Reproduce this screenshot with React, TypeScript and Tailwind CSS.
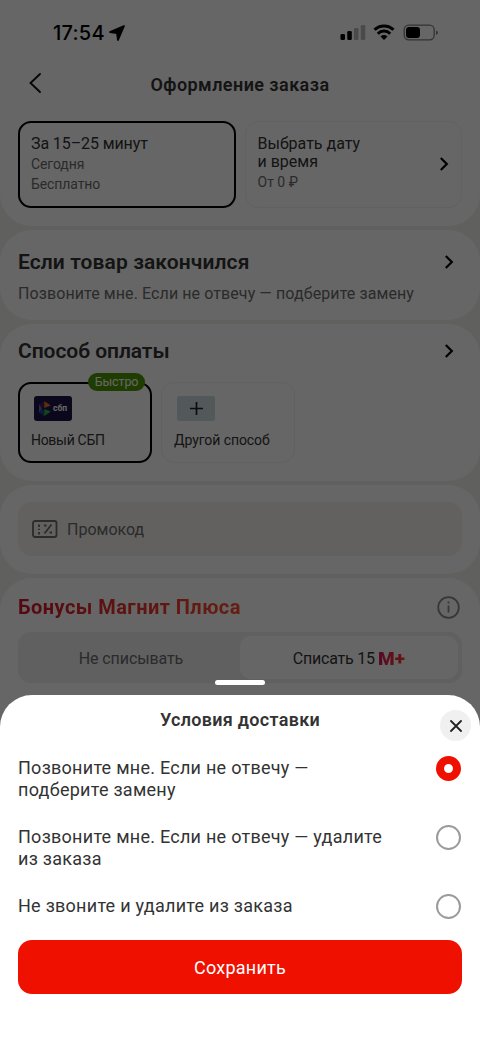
import type { ReactNode } from "react";
import { clsx } from "clsx";

// ─────────────────────────────────────────────
// Иконки
// ─────────────────────────────────────────────

function ChevronRight({ className }: { className?: string }) {
  return (
    <svg className={clsx("h-4 w-4 shrink-0", className)} viewBox="0 0 16 16" fill="none" stroke="#000" strokeWidth="2.2">
      <path d="M4.800 2l6 6-6 6" />
    </svg>
  );
}

function StatusIcons() {
  return (
    <svg className="h-[18px] w-[100px]" viewBox="0 0 100 18">
      <rect x="0.500" y="10" width="4.500" height="6" rx="1.300" />
      <rect x="7.300" y="7" width="4.500" height="9" rx="1.300" />
      <rect x="14" y="4" width="4.500" height="12" rx="1.300" fill="#b9b9b9" />
      <rect x="20.800" y="1" width="4.500" height="15" rx="1.300" fill="#b9b9b9" />
      <g fill="none" stroke="#000" strokeWidth="3">
        <path d="M34.500 5.800a13.500 13.500 0 0 1 19 0" />
        <path d="M37.800 9.700a8.700 8.700 0 0 1 12.400 0" />
      </g>
      <path d="M40.500 12.400a5 5 0 0 1 7 0L44 16z" />
      <rect x="64.200" y="1.200" width="30" height="14.600" rx="4.500" fill="none" stroke="#808080" strokeWidth="1.300" />
      <rect x="66" y="3" width="14" height="11" rx="3" />
      <path d="M96 6.500q2 .6 2 2.200t-2 2.200z" fill="#808080" />
    </svg>
  );
}

function CouponIcon() {
  return (
    <svg className="h-[18px] w-[26px] shrink-0" viewBox="0 0 26 18" fill="none" stroke="#6b6b6b" strokeWidth="1.800">
      <rect x="1" y="1" width="23.500" height="16" rx="2" />
      <path d="M7 4.500v2.500M7 8.700v1.300M7 12v2.500M19.500 4.500l-7 9" />
      <path d="M12 4.500h2.500v2H12zM17.500 11.500H20v2h-2.500z" fill="#6b6b6b" stroke="none" />
    </svg>
  );
}

function SbpMark() {
  return (
    <svg className="h-[15px] w-[12px] shrink-0" viewBox="0 0 12 15">
      <path d="M0 3l3 4.500L0 12z" fill="#5b67b2" />
      <path d="M5 0v5.500L3.200 7 .4 3.500z" fill="#8d3b7a" opacity=".35" />
      <path d="M5.300 0l6.500 4.500-6.500 2.500z" fill="#e8702a" />
      <path d="M5.300 8l6.500 2.500-6.500 4.500z" fill="#2bb24c" />
      <path d="M.4 11.500L3.200 8 5 9.500V15z" fill="#1487c9" opacity=".5" />
    </svg>
  );
}

// ─────────────────────────────────────────────
// Компоненты
// ─────────────────────────────────────────────

function Section({ children, className }: { children: ReactNode; className?: string }) {
  return <section className={clsx("bg-white px-[18px]", className)}>{children}</section>;
}

function Radio({ checked }: { checked: boolean }) {
  return (
    <span
      className={clsx(
        "mr-px h-[25px] w-[25px] shrink-0 rounded-full bg-white",
        checked ? "border-8 border-[#f01000]" : "border-2 border-[#9b9b9b]"
      )}
    />
  );
}

const options = [
  { lines: ["Позвоните мне. Если не отвечу —", "подберите замену"], checked: true },
  { lines: ["Позвоните мне. Если не отвечу — удалите", "из заказа"], checked: false },
  { lines: ["Не звоните и удалите из заказа"], checked: false },
];

function DeliverySheet() {
  return (
    <div className="absolute inset-x-0 bottom-0 h-[361px]">
      <div className="mx-auto h-[5px] w-[50px] rounded-full bg-white" />
      <div className="mt-[10px] flex h-[346px] flex-col rounded-t-[32px] bg-white px-[18px]">
        <div className="relative flex h-[61px] justify-center pt-3">
          <h2 className="text-[18px] leading-[26px] font-semibold tracking-[0.3px]">Условия доставки</h2>
          <button className="absolute top-[15px] -right-[9px] flex h-[31px] w-[31px] items-center justify-center rounded-full bg-[#f0f0f0]">
            <svg className="h-3 w-3" viewBox="0 0 12 12" stroke="#222" strokeWidth="1.800" strokeLinecap="round">
              <path d="M1 1l10 10M11 1L1 11" />
            </svg>
          </button>
        </div>
        <ul className="flex flex-col gap-6">
          {options.map((o) => (
            <li key={o.lines.join(" ")} className="flex justify-between">
              <div className="pt-px text-[18px] leading-[22px] tracking-[0.26px]">
                {o.lines.map((line) => (
                  <p key={line} className="whitespace-nowrap">{line}</p>
                ))}
              </div>
              <Radio checked={o.checked} />
            </li>
          ))}
        </ul>
        <button className="mt-[21px] h-[54px] w-full rounded-[14px] bg-[#f01000] text-[18px] tracking-[0.25px] text-white">Сохранить</button>
      </div>
    </div>
  );
}

// ─────────────────────────────────────────────
// Экран
// ─────────────────────────────────────────────

export default function App() {
  return (
    <div className="relative h-[1041px] w-[480px] overflow-hidden bg-[#f1f0ec] font-['Roboto',sans-serif] text-[#333]">
      <div className="flex flex-col gap-1">
        <Section className="h-[226px] rounded-b-[32px]">
          <div className="flex h-[60px] items-center justify-between pt-[6px] pr-[22px] pl-[35px] text-black">
            <div className="flex items-center gap-1">
              <span className="font-['Inter',sans-serif] text-[20px] font-medium tracking-[0.25px]">17:54</span>
              <svg className="h-4 w-4" viewBox="0 0 16 16">
                <path d="M15 1L9 15 8 8 1 7z" stroke="#000" strokeWidth="1.800" strokeLinejoin="round" />
              </svg>
            </div>
            <StatusIcons />
          </div>
          <div className="relative flex h-[61px] justify-center pt-3">
            <svg className="absolute top-3 left-[11px] h-[22px] w-[13px]" viewBox="0 0 13 22" fill="none" stroke="#111" strokeWidth="1.900" strokeLinecap="round">
              <path d="M11 2L1.500 11l9.500 9" />
            </svg>
            <h1 className="text-[18px] leading-[26px] font-semibold tracking-[0.44px]">Оформление заказа</h1>
          </div>
          <div className="flex gap-[9px]">
            <div className="h-[87px] w-[218px] rounded-[13px] border-2 border-black px-[11px] pt-3 text-[14px] leading-5 tracking-[-0.1px] text-[#6b6b6b]">
              <p className="text-[16px] leading-[18px] text-[#333]">За 15–25 минут</p>
              <p className="mt-px">Сегодня</p>
              <p>Бесплатно</p>
            </div>
            <div className="flex h-[87px] w-[218px] items-center justify-between rounded-[13px] border border-[#f3f3f3] pr-[9px] pb-[2px] pl-3">
              <div className="text-[16px] leading-[18px]">
                <p>Выбрать дату</p>
                <p>и время</p>
                <p className="mt-px text-[14px] leading-5 text-[#6b6b6b]">От 0 ₽</p>
              </div>
              <ChevronRight />
            </div>
          </div>
        </Section>

        <Section className="h-[90px] rounded-[32px] pt-[18px]">
          <div className="flex items-center justify-between pr-[5px]">
            <h2 className="pt-px text-[21px] leading-[26px] font-semibold tracking-[0.1px]">Если товар закончился</h2>
            <ChevronRight />
          </div>
          <p className="mt-2 text-[16px] leading-[22px] tracking-[0.09px] text-[#6b6b6b]">Позвоните мне. Если не отвечу — подберите замену</p>
        </Section>

        <Section className="h-[157px] rounded-[32px] pt-[14px]">
          <div className="flex items-center justify-between pr-[5px]">
            <h2 className="text-[21px] leading-[26px] font-semibold tracking-[-0.05px]">Способ оплаты</h2>
            <ChevronRight />
          </div>
          <div className="mt-[18px] flex gap-[9px] text-[14px] leading-5">
            <div className="relative h-[81px] w-[134px] rounded-[13px] border-2 border-black px-[11px] pt-3">
              <span className="absolute -top-[11px] right-[5px] flex h-[18px] w-[57px] items-center justify-center rounded-full bg-[#4f9a00] text-[12.5px] tracking-[-0.1px] text-white">Быстро</span>
              <div className="ml-[3px] flex h-[25px] w-[38px] items-center justify-center gap-0.5 rounded-[3px] bg-[#1d1346]">
                <SbpMark />
                <span className="text-[8.5px] leading-none font-bold text-white">сбп</span>
              </div>
              <p className="mt-[9px] tracking-[-0.3px]">Новый СБП</p>
            </div>
            <div className="h-[81px] w-[134px] rounded-[13px] border border-[#f3f3f3] px-3 pt-[13px]">
              <div className="ml-[3px] flex h-[25px] w-[38px] items-center justify-center rounded-[2px] bg-[#cfdbe3]">
                <svg className="h-[13px] w-[13px]" viewBox="0 0 13 13" stroke="#222" strokeWidth="1.700">
                  <path d="M6.500 0v13M0 6.500h13" />
                </svg>
              </div>
              <p className="mt-[9px] tracking-[-0.08px]">Другой способ</p>
            </div>
          </div>
        </Section>

        <Section className="h-[89px] rounded-[32px] pt-[17px]">
          <div className="flex h-[54px] items-center gap-[9px] rounded-[14px] bg-[#f4f3ef] px-[14px] text-[16px] text-[#6b6b6b]">
            <CouponIcon />
            <span className="pt-[2px]">Промокод</span>
          </div>
        </Section>

        <Section className="h-[150px] rounded-t-[32px] pt-[16px]">
          <div className="flex items-center justify-between">
            <h2 className="bg-linear-to-r from-[#d4142a] to-[#ff4a2c] bg-clip-text text-[20px] leading-[26px] font-bold tracking-[0.45px] text-transparent">Бонусы Магнит Плюса</h2>
            <svg className="mr-px h-[25px] w-[25px]" viewBox="0 0 25 25" fill="none" stroke="#8a8a8a" strokeWidth="1.800">
              <circle cx="12.500" cy="12.500" r="10.300" />
              <path d="M12.500 10.500v7M12.500 6.500v2" />
            </svg>
          </div>
          <div className="mt-[12px] flex h-[51px] rounded-[13px] bg-[#f0f0f0] p-1 text-[16px]">
            <div className="flex w-[218px] items-center justify-center pt-[2px] tracking-[-0.1px] text-[#6b6b6b]">Не списывать</div>
            <div className="flex w-[218px] items-center justify-center gap-[3px] rounded-[11px] bg-white pt-[2px]">
              <span className="tracking-[-0.2px]">Списать 15</span>
              <span className="bg-linear-to-r from-[#d4145a] to-[#ff3a1c] bg-clip-text text-[19px] leading-5 font-black tracking-[0.3px] text-transparent">М+</span>
            </div>
          </div>
        </Section>
      </div>

      <div className="absolute inset-0 bg-black/60" />
      <DeliverySheet />
    </div>
  );
}
